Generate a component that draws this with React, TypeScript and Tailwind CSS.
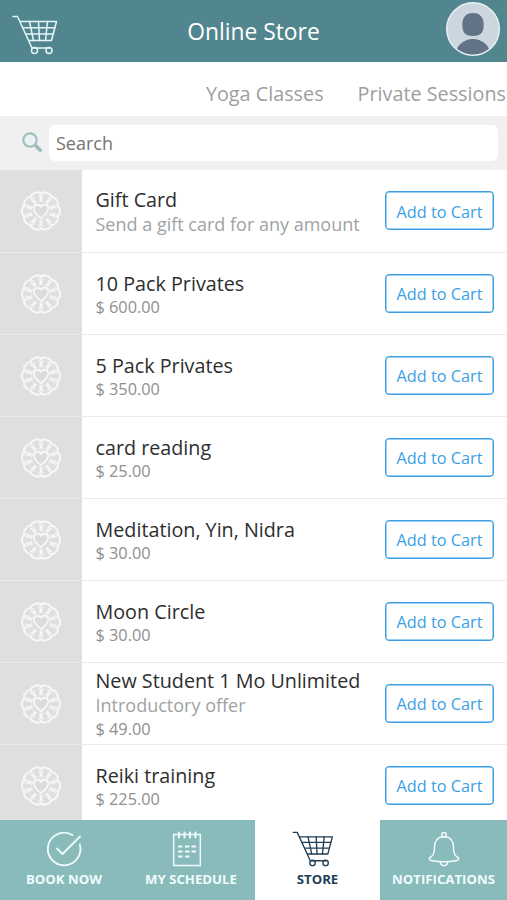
import { useState } from 'react';

const tabs = ['Yoga Classes', 'Private Sessions'];

const products = [
  { id: 1, name: 'Gift Card', note: 'Send a gift card for any amount' },
  { id: 2, name: '10 Pack Privates', price: '$ 600.00' },
  { id: 3, name: '5 Pack Privates', price: '$ 350.00' },
  { id: 4, name: 'card reading', price: '$ 25.00' },
  { id: 5, name: 'Meditation, Yin, Nidra', price: '$ 30.00' },
  { id: 6, name: 'Moon Circle', price: '$ 30.00' },
  {
    id: 7,
    name: 'New Student 1 Mo Unlimited',
    note: 'Introductory offer',
    price: '$ 49.00',
  },
  { id: 8, name: 'Reiki training', price: '$ 225.00' },
];

const petals = Array.from({ length: 10 }, (_, i) => i * 36 + 18);

function CartIcon({ className }: { className?: string }) {
  return (
    <svg
      viewBox="0 0 46 40"
      fill="none"
      stroke="currentColor"
      strokeWidth="1.5"
      strokeLinecap="round"
      strokeLinejoin="round"
      className={className}
    >
      <path d="M1 1.500h4.500L20 33h17.500" />
      <path d="M8.500 6.500H44.500L39.500 25.500H17" />
      <path d="M11.200 12.700h31.500M14 19h27.200" />
      <path d="M17.500 6.500l4 19M26.500 6.500l1 19M35.500 6.500l-2 19" />
      <circle cx="22.500" cy="35.500" r="3" />
      <circle cx="37" cy="35.500" r="3" />
    </svg>
  );
}

function Avatar() {
  return (
    <svg viewBox="0 0 54 54" className="h-[54px] w-[54px]">
      <clipPath id="avatar">
        <circle cx="27" cy="27" r="25.500" />
      </clipPath>
      <circle cx="27" cy="27" r="26.300" fill="#cbd6de" stroke="#eaf2f6" strokeWidth="1.400" />
      <g clipPath="url(#avatar)" fill="#627386">
        <path d="M27 11c7 0 10.700 4.500 10.700 11.500S35.500 34 27 34s-10.700-4.500-10.700-11.500S20 11 27 11z" />
        <ellipse cx="27" cy="53" rx="17.500" ry="16" />
      </g>
    </svg>
  );
}

function SearchIcon() {
  return (
    <svg viewBox="0 0 20 20" fill="none" className="-mt-[3px] h-5 w-5">
      <path d="M13.500 13.500l4.800 4.800" stroke="#9dbbba" strokeWidth="3.400" strokeLinecap="round" />
      <circle cx="8" cy="8" r="6.700" fill="#e9f3f4" stroke="#a2bfbf" strokeWidth="2.200" />
    </svg>
  );
}

function FlowerIcon() {
  return (
    <svg viewBox="0 0 40 40" fill="none" stroke="#f7f7f7" className="h-10 w-10">
      {petals.map((angle) => (
        <g key={angle} transform={`rotate(${angle} 20 20)`}>
          <path d="M14.500 4.500C15-.2 25-.2 25.500 4.500" strokeWidth="2" />
          <path
            d="M18.300 11C16.800 9 16 6.500 17 4.500M21.700 11c1.500-2 2.300-4.500 1.300-6.500"
            strokeWidth="1.500"
          />
        </g>
      ))}
      <path
        d="M20 27.200c-4.400-3.400-7.200-6.200-7.200-9.600 0-4.200 5.300-5.100 7.200-1.800 1.900-3.300 7.200-2.400 7.200 1.800 0 3.400-2.800 6.200-7.200 9.600z"
        fill="#dcdcdc"
        strokeWidth="1.800"
      />
    </svg>
  );
}

function CheckIcon() {
  return (
    <svg
      viewBox="0 0 36 36"
      fill="none"
      stroke="currentColor"
      strokeWidth="1.800"
      strokeLinecap="round"
      strokeLinejoin="round"
      className="h-9 w-9"
    >
      <path d="M26.500 4A16.300 16.300 0 1 0 33.800 13.500" />
      <path d="M11 17.500l5.500 5.500L34 5.500" />
    </svg>
  );
}

function ScheduleIcon() {
  return (
    <svg viewBox="0 0 30 36" fill="none" stroke="currentColor" className="-ml-2 h-9 w-[30px]">
      <rect x="1.700" y="3.500" width="26.600" height="31" strokeWidth="1.500" />
      <path d="M7 1.500v5M12.500 1.500v5M18 1.500v5M23.500 1.500v5" strokeWidth="2" strokeLinecap="round" />
      <path
        d="M6 15.500h4.500M13 15.500h4.500M19.500 15.500h4.500M6 20.500h4.500M13 20.500h4.500M19.500 20.500h4.500M6 25.500h4.500M13 25.500h4.500"
        strokeWidth="2"
      />
    </svg>
  );
}

function BellIcon() {
  return (
    <svg
      viewBox="0 0 32 36"
      fill="none"
      stroke="currentColor"
      strokeWidth="1.500"
      strokeLinejoin="round"
      className="h-9 w-8"
    >
      <circle cx="16" cy="3.700" r="2.200" />
      <path d="M16 5.700c-6.500 0-9.500 4.500-9.500 10.500 0 6.500-1.200 8.300-4.500 10.300-1.200.8-.8 2.500 1 2.900 7.500 1.500 18.500 1.500 26 0 1.800-.4 2.200-2.100 1-2.900-3.300-2-4.500-3.800-4.500-10.300 0-6-3-10.500-9.500-10.500z" />
      <path d="M12.500 30.500c0 5.500 7 5.500 7 0" />
    </svg>
  );
}

const navItems = [
  { label: 'BOOK NOW', icon: <CheckIcon />, width: 'w-[128px]' },
  { label: 'MY SCHEDULE', icon: <ScheduleIcon />, width: 'w-[127px] pr-px' },
  { label: 'STORE', icon: <CartIcon className="-ml-2.5 h-9 w-[42px]" />, width: 'w-[125px]' },
  { label: 'NOTIFICATIONS', icon: <BellIcon />, width: 'w-[127px]' },
];

export default function App() {
  const [active, setActive] = useState('STORE');

  return (
    <div className="flex h-[900px] w-[507px] flex-col overflow-hidden bg-white font-['Open_Sans',sans-serif]">
      {/* Header */}
      <header className="grid h-[62px] shrink-0 grid-cols-[1fr_auto_1fr] items-center bg-[#52868e] text-white">
        <CartIcon className="mt-2 ml-3 h-10 w-[46px] text-[#e4f6fa]" />
        <h1 className="pt-0.5 text-[22.800px]">Online Store</h1>
        <div className="-mt-1 mr-[7px] justify-self-end">
          <Avatar />
        </div>
      </header>

      {/* Tabs */}
      <div className="flex h-[54px] shrink-0 items-center justify-end gap-[34px] pt-2.5 pr-px text-[19.800px] text-[#9c9fa1]">
        {tabs.map((tab) => (
          <button key={tab} className="whitespace-nowrap">
            {tab}
          </button>
        ))}
      </div>

      {/* Search */}
      <div className="flex h-[54px] shrink-0 items-center bg-[#f0f0f0] pr-[9px] pl-[22px]">
        <SearchIcon />
        <input
          type="text"
          placeholder="Search"
          className="ml-[7px] h-9 min-w-0 flex-1 rounded-md bg-white px-[7px] text-[18px] placeholder-[#737373] outline-none"
        />
      </div>

      {/* Products */}
      <div className="min-h-0 flex-1 overflow-hidden">
        {products.map((product) => (
          <div
            key={product.id}
            className="flex h-[82px] items-center border-b border-[#e9ebeb] first:h-[82.500px]"
          >
            <div className="flex h-full w-[82px] shrink-0 items-center justify-center bg-[#dfdfdf] pt-px">
              <FlowerIcon />
            </div>
            <div className="min-w-0 flex-1 pt-[3px] pl-[13.500px] whitespace-nowrap">
              <h2 className="text-[19.740px] leading-[25px] text-[#2e2e2e]">{product.name}</h2>
              {product.note && (
                <p className="text-[18px] leading-[25px] text-[#a0a3a5]">{product.note}</p>
              )}
              {product.price && (
                <p className="text-[16.300px] leading-[23px] text-[#8d8f91]">{product.price}</p>
              )}
            </div>
            <button className="mr-[13px] h-[39px] w-[109px] shrink-0 rounded border border-[#3b9fe6] pt-0.5 text-[16.300px] text-[#3b9fe6] shadow-[inset_0_0_0_0.500px_#3b9fe6]">
              Add to Cart
            </button>
          </div>
        ))}
      </div>

      {/* Bottom navigation */}
      <nav className="flex h-20 shrink-0">
        {navItems.map((item) => (
          <button
            key={item.label}
            onClick={() => setActive(item.label)}
            className={`flex flex-col items-center pt-[11px] ${item.width} ${
              active === item.label ? 'bg-white text-[#213f55]' : 'bg-[#88bbba] text-[#f0fbff]'
            }`}
          >
            {item.icon}
            <span className="mt-[3px] text-[13.200px] font-bold">{item.label}</span>
          </button>
        ))}
      </nav>
    </div>
  );
}
